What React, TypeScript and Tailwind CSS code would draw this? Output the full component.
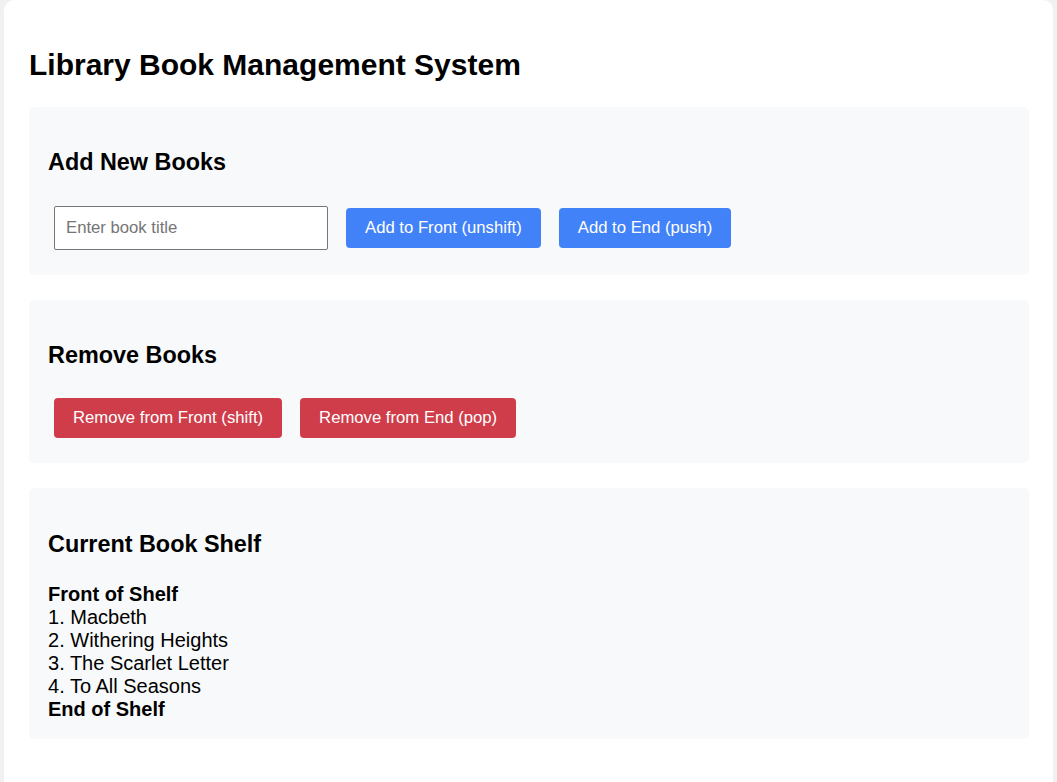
import React, { useState } from "react";

export default function App() {
  const [title, setTitle] = useState("");
  const [books, setBooks] = useState<string[]>([
    "Macbeth",
    "Withering Heights",
    "The Scarlet Letter",
    "To All Seasons",
  ]);

  const addFront = () => {
    if (!title.trim()) return;
    setBooks([title.trim(), ...books]);
    setTitle("");
  };
  const addEnd = () => {
    if (!title.trim()) return;
    setBooks([...books, title.trim()]);
    setTitle("");
  };

  return (
    <div
      className="min-h-[782px] bg-[#f1f1f1] px-[4px] text-black"
      style={{ fontFamily: '"Liberation Sans", Arial, sans-serif' }}
    >
      <div className="min-h-[782px] rounded-t-[10px] bg-white pl-[25px] pr-[24px] pt-[48px] pb-[40px]">
        <h1 className="m-0 text-[30px] font-bold leading-[34px]">
          Library Book Management System
        </h1>

        <section className="mt-[25px] rounded-[5px] bg-[#f8f9fa] px-[19px] pt-[20px] pb-[20px]">
          <h3 className="mt-[22px] mb-[25px] text-[23.4px] font-bold leading-[27px]">
            Add New Books
          </h3>
          <div className="flex items-center gap-[18px] py-[5px] pl-[6px]">
            <input
              value={title}
              onChange={(e) => setTitle(e.target.value)}
              placeholder="Enter book title"
              className="h-[44px] w-[274px] rounded-[2px] border border-[#767676] bg-white px-[11px] text-[16.7px] text-black placeholder:text-[#757575] outline-none"
            />
            <button
              onClick={addFront}
              className="h-[40px] rounded-[4px] bg-[#4282f8] px-[19px] text-[16.7px] text-white"
            >
              Add to Front (unshift)
            </button>
            <button
              onClick={addEnd}
              className="h-[40px] rounded-[4px] bg-[#4282f8] px-[19px] text-[16.7px] text-white"
            >
              Add to End (push)
            </button>
          </div>
        </section>

        <section className="mt-[25px] rounded-[5px] bg-[#f8f9fa] px-[19px] pt-[20px] pb-[20px]">
          <h3 className="mt-[22px] mb-[24px] text-[23.4px] font-bold leading-[27px]">
            Remove Books
          </h3>
          <div className="flex items-center gap-[18px] py-[5px] pl-[6px]">
            <button
              onClick={() => setBooks(books.slice(1))}
              className="h-[40px] rounded-[4px] bg-[#cf3d4a] px-[19px] text-[16.7px] text-white"
            >
              Remove from Front (shift)
            </button>
            <button
              onClick={() => setBooks(books.slice(0, -1))}
              className="h-[40px] rounded-[4px] bg-[#cf3d4a] px-[19px] text-[16.7px] text-white"
            >
              Remove from End (pop)
            </button>
          </div>
        </section>

        <section className="mt-[25px] rounded-[5px] bg-[#f8f9fa] px-[19px] pt-[20px] pb-[18px]">
          <h3 className="mt-[23px] mb-[25px] text-[23.4px] font-bold leading-[27px]">
            Current Book Shelf
          </h3>
          <div className="text-[20px] leading-[23px]">
            <div className="font-bold">Front of Shelf</div>
            {books.map((b, i) => (
              <div key={i}>
                {i + 1}. {b}
              </div>
            ))}
            <div className="font-bold">End of Shelf</div>
          </div>
        </section>
      </div>
    </div>
  );
}
